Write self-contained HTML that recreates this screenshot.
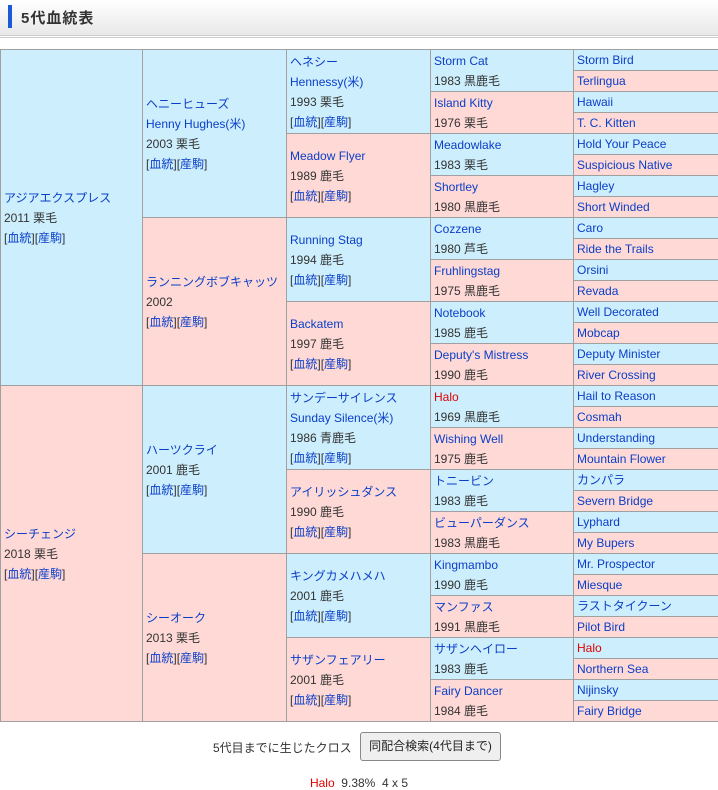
<!DOCTYPE html>
<html><head><meta charset="utf-8"><style>
body{margin:0;width:718px;height:790px;background:#fff;font-family:"Liberation Sans","Noto Sans CJK JP",sans-serif;font-size:12px;color:#333;overflow:hidden;position:relative}
.hd{position:absolute;left:0;top:0;width:718px;height:35px;background:linear-gradient(#fff,#e8e8e8);border-bottom:3px double #ccc}
.hd .bar{position:absolute;left:8px;top:5px;width:4px;height:23px;background:#1a5ad8}
.hd .t{position:absolute;left:21px;top:7px;font-size:15px;font-weight:bold;color:#333;letter-spacing:1px}
table{position:absolute;left:0;top:49px;border-collapse:collapse;table-layout:fixed;width:718px}
td{border:1px solid #a0a0a0;padding:0 3px;height:20px;line-height:20px;vertical-align:middle;white-space:nowrap;overflow:hidden}
.b{background:#cdeefc}.p{background:#fed9d6}
a{color:#0a3ec8;text-decoration:none}
.r{color:#e00000}
.ft{position:absolute;top:732px;left:0;width:718px;text-align:center}
.ft span{position:absolute;left:213px;top:7px}
.btn{position:absolute;left:360px;top:0;width:139px;height:27px;border:1px solid #888;border-radius:3px;background:#efefef;line-height:27px;font-size:12px;color:#222}
.x{position:absolute;top:776px;left:0;width:718px;text-align:center}
</style></head><body>
<div class="hd"><div class="bar"></div><div class="t">5代血統表</div></div>
<table>
<colgroup><col style="width:142px"><col style="width:144px"><col style="width:144px"><col style="width:143px"><col style="width:145px"></colgroup>
<tr><td rowspan="16" class="b"><a>アジアエクスプレス</a><br>2011 栗毛<br>[<a>血統</a>][<a>産駒</a>]</td>
<td rowspan="8" class="b"><a>ヘニーヒューズ</a><br><a>Henny Hughes(米)</a><br>2003 栗毛<br>[<a>血統</a>][<a>産駒</a>]</td>
<td rowspan="4" class="b"><a>ヘネシー</a><br><a>Hennessy(米)</a><br>1993 栗毛<br>[<a>血統</a>][<a>産駒</a>]</td>
<td rowspan="2" class="b"><a>Storm Cat</a><br>1983 黒鹿毛</td><td class="b"><a>Storm Bird</a></td></tr>
<tr><td class="p"><a>Terlingua</a></td></tr>
<tr><td rowspan="2" class="p"><a>Island Kitty</a><br>1976 栗毛</td><td class="b"><a>Hawaii</a></td></tr>
<tr><td class="p"><a>T. C. Kitten</a></td></tr>
<tr><td rowspan="4" class="p"><a>Meadow Flyer</a><br>1989 鹿毛<br>[<a>血統</a>][<a>産駒</a>]</td>
<td rowspan="2" class="b"><a>Meadowlake</a><br>1983 栗毛</td><td class="b"><a>Hold Your Peace</a></td></tr>
<tr><td class="p"><a>Suspicious Native</a></td></tr>
<tr><td rowspan="2" class="p"><a>Shortley</a><br>1980 黒鹿毛</td><td class="b"><a>Hagley</a></td></tr>
<tr><td class="p"><a>Short Winded</a></td></tr>
<tr><td rowspan="8" class="p"><a>ランニングボブキャッツ</a><br>2002<br>[<a>血統</a>][<a>産駒</a>]</td>
<td rowspan="4" class="b"><a>Running Stag</a><br>1994 鹿毛<br>[<a>血統</a>][<a>産駒</a>]</td>
<td rowspan="2" class="b"><a>Cozzene</a><br>1980 芦毛</td><td class="b"><a>Caro</a></td></tr>
<tr><td class="p"><a>Ride the Trails</a></td></tr>
<tr><td rowspan="2" class="p"><a>Fruhlingstag</a><br>1975 黒鹿毛</td><td class="b"><a>Orsini</a></td></tr>
<tr><td class="p"><a>Revada</a></td></tr>
<tr><td rowspan="4" class="p"><a>Backatem</a><br>1997 鹿毛<br>[<a>血統</a>][<a>産駒</a>]</td>
<td rowspan="2" class="b"><a>Notebook</a><br>1985 鹿毛</td><td class="b"><a>Well Decorated</a></td></tr>
<tr><td class="p"><a>Mobcap</a></td></tr>
<tr><td rowspan="2" class="p"><a>Deputy's Mistress</a><br>1990 鹿毛</td><td class="b"><a>Deputy Minister</a></td></tr>
<tr><td class="p"><a>River Crossing</a></td></tr>
<tr><td rowspan="16" class="p"><a>シーチェンジ</a><br>2018 栗毛<br>[<a>血統</a>][<a>産駒</a>]</td>
<td rowspan="8" class="b"><a>ハーツクライ</a><br>2001 鹿毛<br>[<a>血統</a>][<a>産駒</a>]</td>
<td rowspan="4" class="b"><a>サンデーサイレンス</a><br><a>Sunday Silence(米)</a><br>1986 青鹿毛<br>[<a>血統</a>][<a>産駒</a>]</td>
<td rowspan="2" class="b"><a class="r">Halo</a><br>1969 黒鹿毛</td><td class="b"><a>Hail to Reason</a></td></tr>
<tr><td class="p"><a>Cosmah</a></td></tr>
<tr><td rowspan="2" class="p"><a>Wishing Well</a><br>1975 鹿毛</td><td class="b"><a>Understanding</a></td></tr>
<tr><td class="p"><a>Mountain Flower</a></td></tr>
<tr><td rowspan="4" class="p"><a>アイリッシュダンス</a><br>1990 鹿毛<br>[<a>血統</a>][<a>産駒</a>]</td>
<td rowspan="2" class="b"><a>トニービン</a><br>1983 鹿毛</td><td class="b"><a>カンパラ</a></td></tr>
<tr><td class="p"><a>Severn Bridge</a></td></tr>
<tr><td rowspan="2" class="p"><a>ビューパーダンス</a><br>1983 黒鹿毛</td><td class="b"><a>Lyphard</a></td></tr>
<tr><td class="p"><a>My Bupers</a></td></tr>
<tr><td rowspan="8" class="p"><a>シーオーク</a><br>2013 栗毛<br>[<a>血統</a>][<a>産駒</a>]</td>
<td rowspan="4" class="b"><a>キングカメハメハ</a><br>2001 鹿毛<br>[<a>血統</a>][<a>産駒</a>]</td>
<td rowspan="2" class="b"><a>Kingmambo</a><br>1990 鹿毛</td><td class="b"><a>Mr. Prospector</a></td></tr>
<tr><td class="p"><a>Miesque</a></td></tr>
<tr><td rowspan="2" class="p"><a>マンファス</a><br>1991 黒鹿毛</td><td class="b"><a>ラストタイクーン</a></td></tr>
<tr><td class="p"><a>Pilot Bird</a></td></tr>
<tr><td rowspan="4" class="p"><a>サザンフェアリー</a><br>2001 鹿毛<br>[<a>血統</a>][<a>産駒</a>]</td>
<td rowspan="2" class="b"><a>サザンヘイロー</a><br>1983 鹿毛</td><td class="b"><a class="r">Halo</a></td></tr>
<tr><td class="p"><a>Northern Sea</a></td></tr>
<tr><td rowspan="2" class="p"><a>Fairy Dancer</a><br>1984 鹿毛</td><td class="b"><a>Nijinsky</a></td></tr>
<tr><td class="p"><a>Fairy Bridge</a></td></tr>
</table>
<div class="ft"><span>5代目までに生じたクロス</span><div class="btn">同配合検索(4代目まで)</div></div>
<div class="x"><span class="r">Halo</span>&nbsp; 9.38%&nbsp; 4 x 5</div>
</body></html>
